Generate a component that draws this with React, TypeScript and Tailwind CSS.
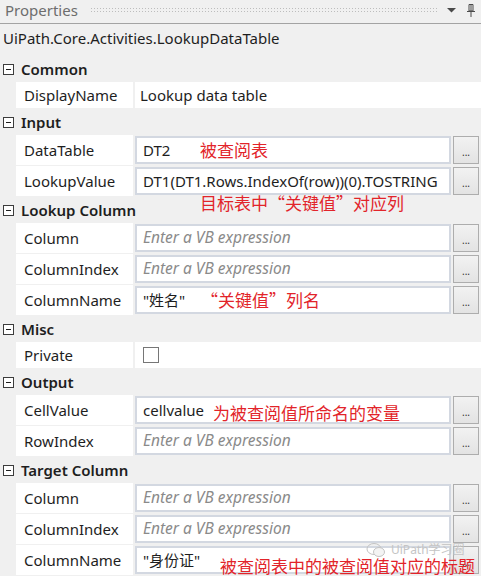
import React from 'react';

const FONT = { fontFamily: '"Noto Sans", "Noto Sans CJK SC", sans-serif' };

const Minus = () => (
  <div className="w-[11px] h-[11px] border border-[#3c3c3c] bg-white flex items-center justify-center">
    <div className="w-[5px] h-px bg-[#1e1e1e]" />
  </div>
);

const Header = ({ title }: { title: string }) => (
  <div className="h-[26px] flex items-center pl-[3px]">
    <Minus />
    <span className="ml-[7px] font-semibold text-[15px] text-[#1e1e1e]">{title}</span>
  </div>
);

const PlainRow = ({ label, children }: { label: string; children?: React.ReactNode }) => (
  <div className="ml-[16px] flex h-[26px] gap-[2px] mb-px">
    <div className="w-[117px] bg-white pl-[8px] flex items-center text-[15px] text-[#1e1e1e]">{label}</div>
    <div className="flex-1 bg-white pl-[5px] flex items-center text-[15px] text-[#1e1e1e]">{children}</div>
  </div>
);

const BoxRow = ({ label, value, placeholder }: { label: string; value?: string; placeholder?: boolean }) => (
  <div className="ml-[16px] flex h-[31px] gap-[2px]">
    <div className="w-[117px] h-[30px] bg-white pl-[8px] flex items-center text-[15px] text-[#1e1e1e]">{label}</div>
    <div className="flex-1 flex gap-[2px] pr-[2px] pt-px">
      <div className="flex-1 h-[28px] border-2 border-[#d3d8e1] bg-white px-[6px] flex items-center text-[15px] whitespace-nowrap overflow-hidden">
        {placeholder ? (
          <span className="italic text-[15.5px] text-[#8a8a8a]">Enter a VB expression</span>
        ) : (
          <span className="text-[#1e1e1e]">{value}</span>
        )}
      </div>
      <div className="w-[26px] h-[28px] border border-[#adadad] bg-gradient-to-b from-[#f2f2f2] to-[#e3e3e3] flex items-end justify-center pb-[6px]">
        <span className="text-[10px] leading-none text-[#333]">...</span>
      </div>
    </div>
  </div>
);

const Note = ({ text, className }: { text: string; className: string }) => (
  <div className={`absolute text-[17px] leading-none text-[#e2242a] whitespace-nowrap ${className}`} style={{ fontFamily: '"Noto Sans CJK SC", sans-serif' }}>
    {text}
  </div>
);

export default function App() {
  return (
    <div className="relative w-[481px] h-[576px] bg-[#f0f0f0] overflow-hidden" style={FONT}>
      {/* title bar */}
      <div className="h-[24px] flex items-center border-b border-[#a3a3a3] pb-[3px]">
        <span className="ml-[5px] text-[15px] text-[#6d6d6d]">Properties</span>
        <div className="ml-[12px] w-[348px] h-[7px] bg-[radial-gradient(#bdbdbd_0.8px,transparent_0.9px)] bg-[length:3px_3px]" />
        <svg className="ml-[9px]" width="9" height="6" viewBox="0 0 9 6">
          <path d="M0 1 L9 1 L4.5 5.5 Z" fill="#4a4a4a" />
        </svg>
        <svg className="ml-[10px]" width="10" height="13" viewBox="0 0 10 13">
          <path d="M3 0.5 H7 V7 H3 Z" fill="none" stroke="#4a4a4a" />
          <path d="M5 0.5 V7" stroke="#4a4a4a" />
          <path d="M1 7.5 H9" stroke="#4a4a4a" />
          <path d="M5 8 V13" stroke="#4a4a4a" />
        </svg>
      </div>

      <div className="h-[32px] pt-[3px] pl-[3px] text-[15px] text-[#1e1e1e]">UiPath.Core.Activities.LookupDataTable</div>

      <Header title="Common" />
      <PlainRow label="DisplayName">Lookup data table</PlainRow>

      <Header title="Input" />
      <BoxRow label="DataTable" value="DT2" />
      <BoxRow label="LookupValue" value="DT1(DT1.Rows.IndexOf(row))(0).TOSTRING" />

      <Header title="Lookup Column" />
      <BoxRow label="Column" placeholder />
      <BoxRow label="ColumnIndex" placeholder />
      <BoxRow label="ColumnName" value={'"姓名"'} />

      <Header title="Misc" />
      <PlainRow label="Private">
        <div className="ml-[3px] w-[16px] h-[16px] border border-[#767676] bg-white" />
      </PlainRow>

      <Header title="Output" />
      <BoxRow label="CellValue" value="cellvalue" />
      <BoxRow label="RowIndex" placeholder />

      <Header title="Target Column" />
      <BoxRow label="Column" placeholder />
      <BoxRow label="ColumnIndex" placeholder />
      <BoxRow label="ColumnName" value={'"身份证"'} />

      {/* red annotations */}
      <Note text="被查阅表" className="left-[200px] top-[141px]" />
      <Note text="目标表中“关键值”对应列" className="left-[200px] top-[194px]" />
      <Note text="“关键值”列名" className="left-[201px] top-[291px]" />
      <Note text="为被查阅值所命名的变量" className="left-[213px] top-[404px]" />

      {/* watermark */}
      <div className="absolute left-[366px] top-[542px] flex items-center gap-[5px] text-[12px] leading-none text-[#c4c4c4]">
        <svg width="20" height="16" viewBox="0 0 20 16">
          <ellipse cx="8" cy="7" rx="7" ry="5.5" fill="none" stroke="#c4c4c4" />
          <ellipse cx="13" cy="10" rx="5.5" ry="4.5" fill="#f4f4f4" stroke="#c4c4c4" />
        </svg>
        <span>UiPath学习圈</span>
      </div>
      <Note text="被查阅表中的被查阅值对应的标题" className="left-[220px] top-[557px]" />
    </div>
  );
}
